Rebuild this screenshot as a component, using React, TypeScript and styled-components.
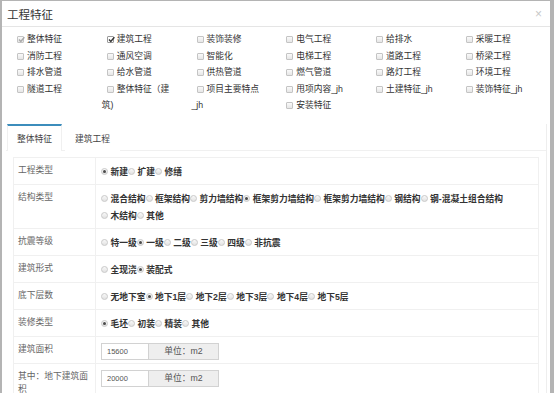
import React from 'react'
import styled, { createGlobalStyle } from 'styled-components'

const GlobalStyle = createGlobalStyle`
    html, body {
        margin: 0;
        padding: 0;
        background: #b4b4b4;
        font-family: "Liberation Sans", "Noto Sans CJK SC", sans-serif;
    }
`

const Page = styled.div`
    height: 393px;
    box-sizing: border-box;
    padding: 1px 0 0 2px;
    overflow: hidden;
    display: flex;
`

const Modal = styled.div`
    width: 548px;
    height: 392px;
    background: #fff;
    overflow: hidden;
`

const Header = styled.div`
    height: 25px;
    border-bottom: 1px solid #e5e5e5;
    display: flex;
    align-items: center;
    justify-content: space-between;
    padding: 0 8px 0 5px;
`

const Title = styled.div`
    font-size: 11.5px;
    color: #333;
`

const Close = styled.div`
    font-size: 12px;
    color: #c8c8c8;
    line-height: 1;
`

const Body = styled.div`
    padding: 4px 3px 0 4px;
`

const CheckGrid = styled.div`
    display: flow-root;
`

const CheckItem = styled.div`
    float: left;
    width: 89.75px;
    box-sizing: border-box;
    padding: 0 11px 0 6px;
    font-size: 8.75px;
    line-height: 16.5px;
    color: #333;
`

const Box = styled.span<{ $checked?: boolean; $disabled?: boolean }>`
    display: inline-block;
    box-sizing: border-box;
    width: 7px;
    height: 7px;
    margin: 0 3px 0 5px;
    vertical-align: -1px;
    border: 1px solid ${p => (p.$checked && !p.$disabled ? '#9a9a9a' : '#c4c4c4')};
    border-radius: 1px;
    background: ${p => (p.$checked && !p.$disabled ? '#fff' : 'linear-gradient(#fafafa, #e6e6e6)')};
    position: relative;

    svg {
        position: absolute;
        left: -1px;
        top: -2px;
    }
`

const Tabs = styled.div`
    margin-top: 10px;
    border-right: 1px solid #eeeeee;
`

const TabBar = styled.div`
    display: flex;
    border-bottom: 1px solid #f0f0f0;
    padding-left: 1px;
`

const Tab = styled.div<{ $active?: boolean }>`
    border-top: 2px solid ${p => (p.$active ? '#3c8dbc' : 'transparent')};
    border-left: 1px solid ${p => (p.$active ? '#f0f0f0' : 'transparent')};
    border-right: 1px solid ${p => (p.$active ? '#f0f0f0' : 'transparent')};
    padding: 2px 9px 0;
    margin-right: 3px;
    margin-bottom: -1px;
    line-height: 23px;
    font-size: 8.75px;
    color: #444;
    background: #fff;
`

const Panel = styled.div`
    padding: 6px 7px 0 7px;
`

const FormTable = styled.div`
    border: 1px solid #f0f0f0;
`

const Row = styled.div`
    display: grid;
    grid-template-columns: 82px 1fr;
    & + & {
        border-top: 1px solid #f0f0f0;
    }
`

const Label = styled.div`
    box-sizing: border-box;
    padding: 6px 4px 0 4px;
    border-right: 1px solid #f0f0f0;
    font-size: 8.75px;
    line-height: 13px;
    color: #666;
`

const Value = styled.div`
    padding: 6px 8px 3px 5px;
    font-size: 8.75px;
    line-height: 17px;
    color: #333;
`

const Option = styled.span`
    display: inline-block;
    white-space: nowrap;
    font-weight: 700;
`

const Radio = styled.span<{ $checked?: boolean }>`
    display: inline-block;
    box-sizing: border-box;
    width: 7px;
    height: 7px;
    margin-right: 2.5px;
    vertical-align: -0.5px;
    border-radius: 50%;
    border: 1px solid #c9c9c9;
    background: linear-gradient(#f8f8f8, #e2e2e2);
    position: relative;

    &::after {
        content: '';
        display: ${p => (p.$checked ? 'block' : 'none')};
        position: absolute;
        left: 1px;
        top: 1px;
        width: 3px;
        height: 3px;
        border-radius: 50%;
        background: #4a4a4a;
    }
`

const InputGroup = styled.div`
    display: inline-flex;
    height: 17px;
    vertical-align: top;
`

const Input = styled.div`
    width: 48px;
    box-sizing: border-box;
    border: 1px solid #d2d2d2;
    padding-left: 5px;
    font-size: 7.5px;
    line-height: 15px;
    color: #555;
`

const Addon = styled.div`
    width: 70px;
    box-sizing: border-box;
    border: 1px solid #d2d2d2;
    border-left: none;
    background: #eeeeee;
    text-align: center;
    font-size: 8.75px;
    line-height: 15px;
    color: #555;
`

interface ICheck {
    name: string
    checked?: boolean
    disabled?: boolean
}

const checks: ICheck[] = [
    { name: '整体特征', checked: true, disabled: true },
    { name: '建筑工程', checked: true },
    { name: '装饰装修' },
    { name: '电气工程' },
    { name: '给排水' },
    { name: '采暖工程' },
    { name: '消防工程' },
    { name: '通风空调' },
    { name: '智能化' },
    { name: '电梯工程' },
    { name: '道路工程' },
    { name: '桥梁工程' },
    { name: '排水管道' },
    { name: '给水管道' },
    { name: '供热管道' },
    { name: '燃气管道' },
    { name: '路灯工程' },
    { name: '环境工程' },
    { name: '隧道工程' },
    { name: '整体特征（建筑)' },
    { name: '项目主要特点_jh' },
    { name: '甩项内容_jh' },
    { name: '土建特征_jh' },
    { name: '装饰特征_jh' },
    { name: '安装特征' },
]

interface IRadioRow {
    label: string
    options: string[]
    checked: number
}

const radioRows: IRadioRow[] = [
    { label: '工程类型', options: ['新建', '扩建', '修缮'], checked: 0 },
    {
        label: '结构类型',
        options: ['混合结构', '框架结构', '剪力墙结构', '框架剪力墙结构', '框架剪力墙结构', '钢结构', '钢-混凝土组合结构', '木结构', '其他'],
        checked: 3,
    },
    { label: '抗震等级', options: ['特一级', '一级', '二级', '三级', '四级', '非抗震'], checked: 1 },
    { label: '建筑形式', options: ['全现浇', '装配式'], checked: 1 },
    { label: '底下层数', options: ['无地下室', '地下1层', '地下2层', '地下3层', '地下4层', '地下5层'], checked: 1 },
    { label: '装修类型', options: ['毛坯', '初装', '精装', '其他'], checked: 0 },
]

const inputRows = [
    { label: '建筑面积', value: '15600' },
    { label: '其中：地下建筑面积', value: '20000' },
]

const CheckMark = ({ disabled }: { disabled?: boolean }) => (
    <svg width="9" height="9" viewBox="0 0 9 9">
        <path d="M2 4.6 L3.8 6.4 L7.4 2.2" fill="none" stroke={disabled ? '#a8a8a8' : '#333'} strokeWidth="1.4" />
    </svg>
)

function App() {
    return (
        <>
            <GlobalStyle />
            <Page>
                <Modal>
                    <Header>
                        <Title>工程特征</Title>
                        <Close>×</Close>
                    </Header>
                    <Body>
                        <CheckGrid>
                            {checks.map((c, i) => (
                                <CheckItem key={i}>
                                    <Box $checked={c.checked} $disabled={c.disabled}>
                                        {c.checked && <CheckMark disabled={c.disabled} />}
                                    </Box>
                                    {c.name}
                                </CheckItem>
                            ))}
                        </CheckGrid>

                        <Tabs>
                            <TabBar>
                                <Tab $active>整体特征</Tab>
                                <Tab>建筑工程</Tab>
                            </TabBar>
                            <Panel>
                                <FormTable>
                                    {radioRows.map(r => (
                                        <Row key={r.label}>
                                            <Label>{r.label}</Label>
                                            <Value>
                                                {r.options.map((o, i) => (
                                                    <Option key={i}>
                                                        <Radio $checked={i === r.checked} />
                                                        {o}
                                                    </Option>
                                                ))}
                                            </Value>
                                        </Row>
                                    ))}
                                    {inputRows.map(r => (
                                        <Row key={r.label}>
                                            <Label>{r.label}</Label>
                                            <Value>
                                                <InputGroup>
                                                    <Input>{r.value}</Input>
                                                    <Addon>单位：m2</Addon>
                                                </InputGroup>
                                            </Value>
                                        </Row>
                                    ))}
                                </FormTable>
                            </Panel>
                        </Tabs>
                    </Body>
                </Modal>
            </Page>
        </>
    )
}

export default App
